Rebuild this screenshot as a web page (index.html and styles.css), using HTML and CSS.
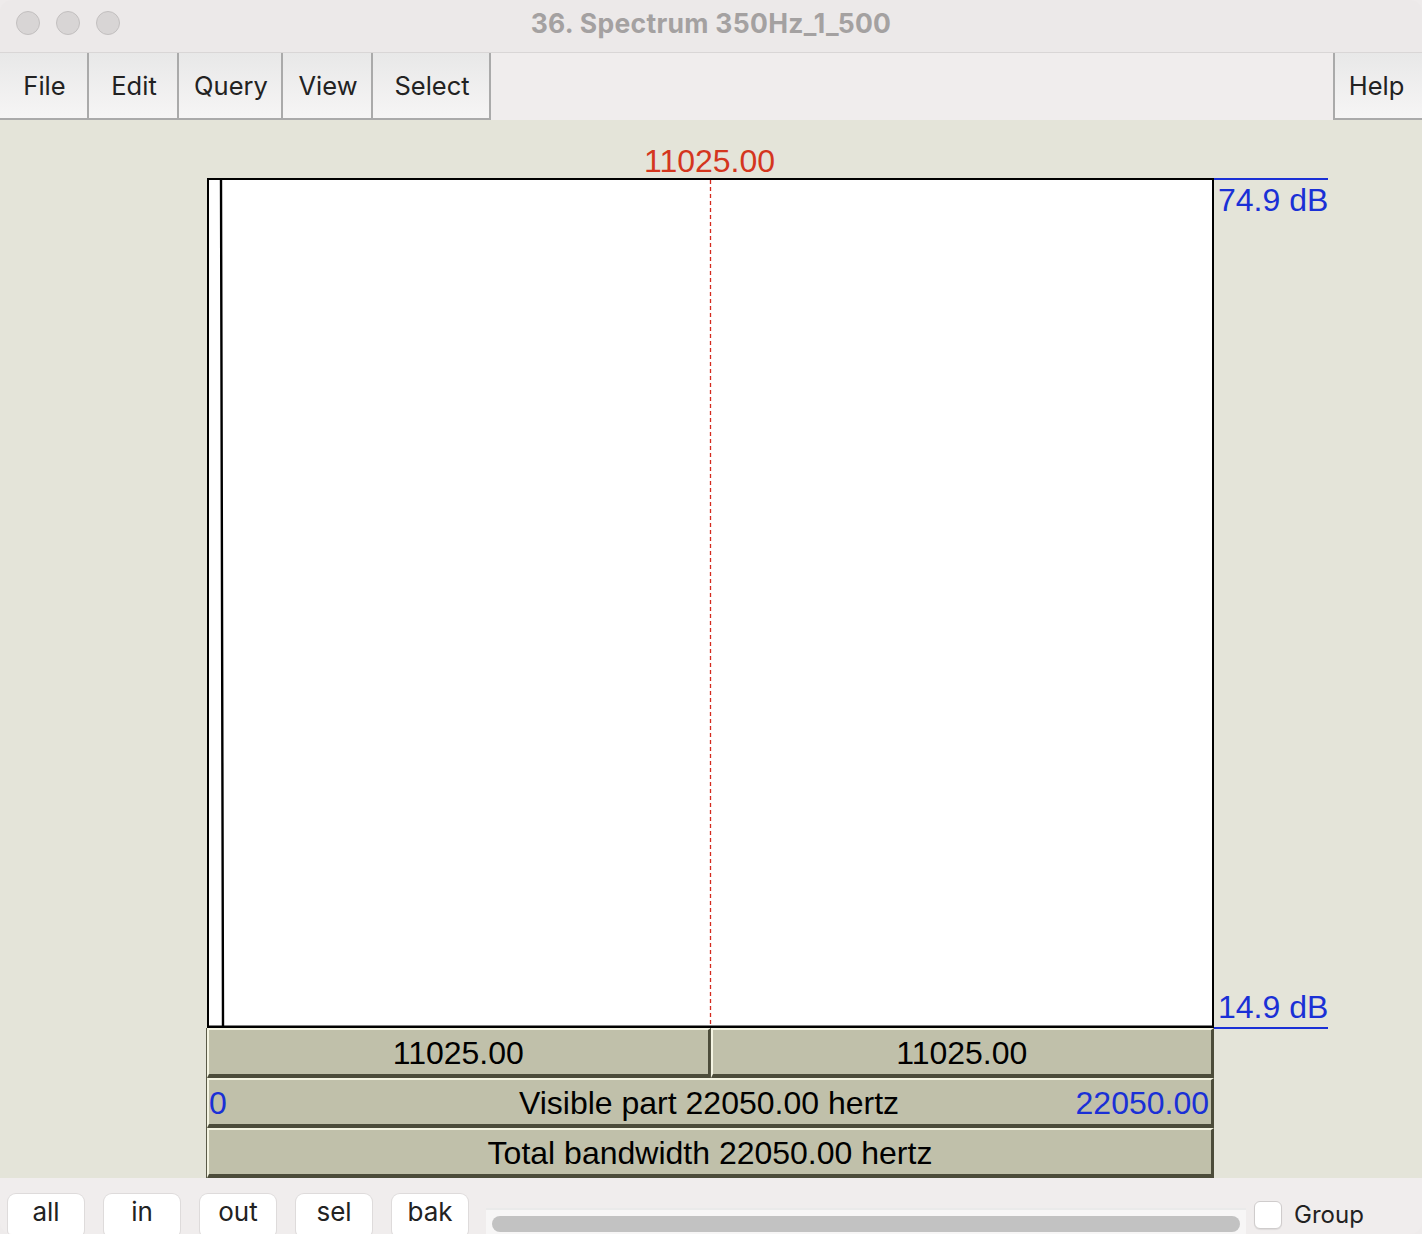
FILE: index.html
```html
<!DOCTYPE html>
<html>
<head>
<meta charset="utf-8">
<link rel="stylesheet" href="styles.css">
</head>
<body>
<div class="window">
  <div class="titlebar">
    <div class="lights"><span class="light"></span><span class="light"></span><span class="light"></span></div>
    <div class="title">36. Spectrum 350Hz_1_500</div>
  </div>
  <div class="menubar">
    <div class="menus">
      <div class="menu">File</div>
      <div class="menu">Edit</div>
      <div class="menu">Query</div>
      <div class="menu">View</div>
      <div class="menu">Select</div>
    </div>
    <div class="menu help">Help</div>
  </div>
  <div class="main">
    <div class="cursor-label"><span>11025.00</span></div>
    <div class="plot-row">
      <div class="plot">
        <svg class="plot-svg" width="1007" height="850" viewBox="0 0 1007 850">
          <rect x="1" y="1" width="1005" height="848" fill="#fff" stroke="#000" stroke-width="2"/>
          <polyline points="14,2 14.5,200 16,848" fill="none" stroke="#000" stroke-width="2.4"/>
          <line x1="503.5" y1="2" x2="503.5" y2="850" stroke="#d42a1e" stroke-width="1.3" stroke-dasharray="4,3"/>
          <line x1="0" y1="849" x2="1007" y2="849" stroke="#000" stroke-width="3"/>
        </svg>
      </div>
      <div class="axis">
        <div class="db top">74.9 dB</div>
        <div class="db bottom">14.9 dB</div>
      </div>
    </div>
    <div class="bars">
      <div class="bar-row">
        <div class="bar half">11025.00</div>
        <div class="bar half">11025.00</div>
      </div>
      <div class="bar-row">
        <div class="bar full split"><span class="blue left">0</span><span>Visible part 22050.00 hertz</span><span class="blue right">22050.00</span></div>
      </div>
      <div class="bar-row">
        <div class="bar full">Total bandwidth 22050.00 hertz</div>
      </div>
    </div>
  </div>
  <div class="toolbar">
    <div class="btns">
      <div class="btn">all</div>
      <div class="btn">in</div>
      <div class="btn">out</div>
      <div class="btn">sel</div>
      <div class="btn">bak</div>
    </div>
    <div class="scroll"><div class="thumb"></div></div>
    <div class="group"><span class="check"></span><span>Group</span></div>
  </div>
</div>
</body>
</html>
```
FILE: styles.css
```css
* { box-sizing: border-box; }
html, body { margin: 0; padding: 0; }
body { width: 1422px; height: 1234px; overflow: hidden; background: #eeebeb; font-family: "Liberation Sans", Arial, sans-serif; }
.window { width: 1422px; height: 1234px; display: flex; flex-direction: column; border-radius: 12px; overflow: hidden; background: #efecec; }

.titlebar { height: 52px; position: relative; display: flex; align-items: center; justify-content: center; background: #ece9e9; }
.lights { position: absolute; left: 16px; top: 11px; display: flex; gap: 16px; }
.light { width: 24px; height: 24px; border-radius: 50%; background: #d8d5d5; border: 1px solid #c2bfbf; }
.title { font-family: "Inter", "Liberation Sans", sans-serif; font-weight: 700; font-size: 26.5px; color: #a4a1a1; letter-spacing: 0.3px; margin-top: -7px; }

.menubar { height: 68px; display: flex; justify-content: space-between; background: #f0eded; border-top: 1px solid #d9d6d6; }
.menus { display: flex; }
.menu { height: 67px; display: flex; align-items: center; justify-content: center; padding: 0 10px 0 12px; font-family: "Inter", "Liberation Sans", sans-serif; font-size: 25.5px; color: #222; background: linear-gradient(#e8e8e8, #f6f5f5); border-right: 2px solid #aaa; border-bottom: 2px solid #aaa; }
.menus .menu:nth-child(1) { width: 89px; }
.menus .menu:nth-child(2) { width: 90px; }
.menus .menu:nth-child(3) { width: 104px; }
.menus .menu:nth-child(4) { width: 90px; }
.menus .menu:nth-child(5) { width: 118px; }
.menu.help { width: 89px; border-right: none; border-left: 2px solid #aaa; padding: 0 12px 0 8px; }

.main { height: 1058px; background: #e4e4d9; padding-left: 207px; display: flex; flex-direction: column; }
.cursor-label { height: 58px; width: 1007px; display: flex; justify-content: center; align-items: flex-end; }
.cursor-label span { color: #d4361e; font-size: 32px; line-height: 36px; margin-bottom: -1px; margin-right: 2px; }

.plot-row { display: flex; height: 852px; }
.plot { width: 1007px; height: 852px; }
.plot-svg { display: block; }
.axis { width: 114px; height: 852px; display: flex; flex-direction: column; justify-content: space-between; }
.db { color: #1a30d6; font-size: 32px; padding-left: 4px; line-height: 36px; white-space: nowrap; }
.db.top { border-top: 2px solid #1a30d6; padding-top: 2px; }
.db.bottom { border-bottom: 2px solid #1a30d6; padding-bottom: 2px; margin-bottom: 1px; }

.bars { width: 1007px; display: flex; flex-direction: column; margin-top: -2px; }
.bar-row { display: flex; height: 50px; }
.bar { height: 50px; display: flex; align-items: center; justify-content: center; padding-top: 2px; background: #c0c0aa; font-size: 32px; color: #000; white-space: nowrap; border-style: solid; border-width: 2px 3px 4px 2px; border-color: #f4f4e2 #4c4c3a #4c4c3a #f4f4e2; box-shadow: -1px 0 0 #5a5a48; }
.bar.half { width: 50%; }
.bar.full { width: 100%; }
.bar.split { display: grid; grid-template-columns: 1fr auto 1fr; align-items: center; padding-right: 2px; }
.left { justify-self: start; }
.right { justify-self: end; }
.blue { color: #1a30d6; }

.toolbar { height: 56px; background: #f0eded; display: flex; align-items: flex-start; position: relative; }
.btns { display: flex; gap: 20px; padding-left: 8px; padding-top: 16px; }
.btn { width: 76px; height: 44px; background: #fff; border-radius: 8px; box-shadow: 0 0 0 1px #dedbdb, 0 1px 1px rgba(0,0,0,0.12); display: flex; justify-content: center; padding-top: 2px; font-family: "Inter", "Liberation Sans", sans-serif; font-size: 26px; color: #222; }
.scroll { margin-left: 18px; margin-top: 30px; width: 760px; height: 30px; background: #f7f6f6; border-top: 2px solid #eaeaea; padding: 6px 0 0 6px; }
.thumb { width: 748px; height: 16px; border-radius: 8px; background: #c2c2c2; }
.group { display: flex; align-items: center; gap: 12px; margin-left: 8px; margin-top: 22px; font-family: "Inter", "Liberation Sans", sans-serif; font-size: 24px; color: #222; }
.check { width: 28px; height: 28px; border-radius: 6px; background: #fff; border: 1px solid #cfcccc; box-shadow: 0 1px 1px rgba(0,0,0,0.08); }
```
